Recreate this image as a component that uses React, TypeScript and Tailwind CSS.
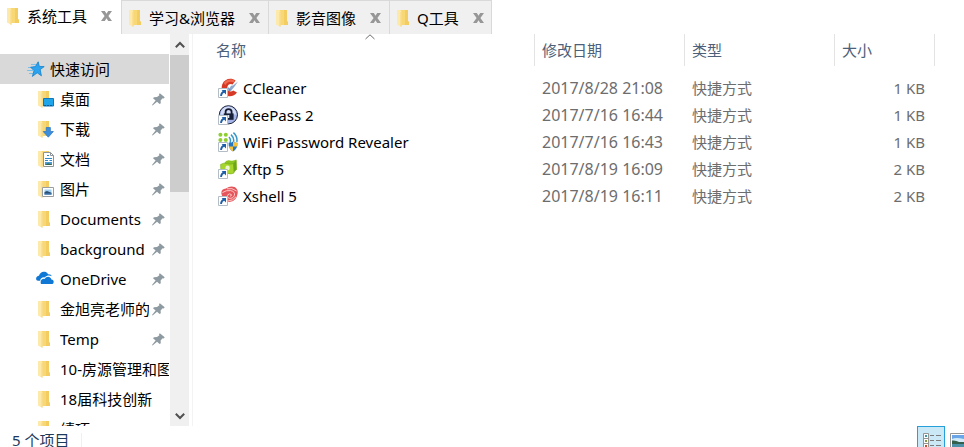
import React from "react";

type IconName =
  | "folder"
  | "desktop"
  | "download"
  | "document"
  | "picture"
  | "onedrive";

type FileIconName = "ccleaner" | "keepass" | "wifi" | "xftp" | "xshell";

const tabs = [
  { label: "系统工具", active: true },
  { label: "学习&浏览器", active: false },
  { label: "影音图像", active: false },
  { label: "Q工具", active: false },
];

const places: { label: string; icon: IconName; pinned: boolean }[] = [
  { label: "桌面", icon: "desktop", pinned: true },
  { label: "下载", icon: "download", pinned: true },
  { label: "文档", icon: "document", pinned: true },
  { label: "图片", icon: "picture", pinned: true },
  { label: "Documents", icon: "folder", pinned: true },
  { label: "background", icon: "folder", pinned: true },
  { label: "OneDrive", icon: "onedrive", pinned: true },
  { label: "金旭亮老师的", icon: "folder", pinned: true },
  { label: "Temp", icon: "folder", pinned: true },
  { label: "10-房源管理和图", icon: "folder", pinned: false },
  { label: "18届科技创新", icon: "folder", pinned: false },
  { label: "绩项", icon: "folder", pinned: false },
];

const files: { name: string; icon: FileIconName; date: string; size: string }[] = [
  { name: "CCleaner", icon: "ccleaner", date: "2017/8/28 21:08", size: "1 KB" },
  { name: "KeePass 2", icon: "keepass", date: "2017/7/16 16:44", size: "1 KB" },
  { name: "WiFi Password Revealer", icon: "wifi", date: "2017/7/16 16:43", size: "1 KB" },
  { name: "Xftp 5", icon: "xftp", date: "2017/8/19 16:09", size: "2 KB" },
  { name: "Xshell 5", icon: "xshell", date: "2017/8/19 16:11", size: "2 KB" },
];

function FolderShape() {
  return (
    <>
      <path d="M3 1H11V12.5H12V16H3Z" fill="#f8d775" />
      <path d="M8 1H11V12.5H12V16H8Z" fill="#f3cd62" />
      <path d="M0 1H3.5L4.5 3V18L0 15.5Z" fill="#fde9a9" />
      <path d="M4 3V17.5" stroke="#f6d480" strokeWidth="1" />
    </>
  );
}

function TabFolder() {
  return (
    <svg width="12" height="18" viewBox="0 0 12 18" className="shrink-0" aria-hidden="true">
      <FolderShape />
    </svg>
  );
}

function PlaceIcon({ name }: { name: IconName }) {
  if (name === "onedrive") {
    return (
      <svg width="18" height="18" viewBox="0 0 18 18" className="shrink-0" aria-hidden="true">
        <path
          d="M0.2 9.5C-0.2 7.4 1 6 3 5.8C3.6 3 6 1.2 8.8 1.8C10.4 2.1 11.6 3 12.3 4.4C14 4.2 15.4 5 15.8 6.3C13.5 4.9 10.6 5.4 8.8 7.4C6.2 7 4.2 8.6 4.2 10.8C2.2 11 0.8 10.8 0.2 9.5Z"
          fill="#0f78d4"
        />
        <path
          d="M5 14C3.8 11.2 5.6 8.4 8.8 8.9C10.2 6 14.5 6 15.4 9.6C17.4 9.5 18.4 11.8 17.2 13.4C16.8 14 16.4 14 15.5 14Z"
          fill="#0f78d4"
        />
      </svg>
    );
  }
  return (
    <svg width="18" height="18" viewBox="0 0 18 18" className="shrink-0" aria-hidden="true">
      <g transform="translate(2 0)">
        <FolderShape />
      </g>
      {name === "desktop" && (
        <>
          <path d="M7.5 8.5H17.5V16H7.5Z" fill="#1ea5ea" stroke="#1277b8" />
          <path d="M8 15.5H17" stroke="#0b5d98" strokeDasharray="2 1" />
        </>
      )}
      {name === "download" && (
        <path d="M10.2 7.5H14.4V11.5H17.4L12.3 17.2L7.2 11.5H10.2Z" fill="#3b8ede" stroke="#2b74c0" strokeWidth="0.7" />
      )}
      {name === "document" && (
        <>
          <path d="M7.5 2.5H14.5L17.5 5.5V16.5H7.5Z" fill="#fff" stroke="#8f9498" />
          <path d="M14.5 2.5V5.5H17.5" fill="none" stroke="#8f9498" />
          <path d="M11 5.5H13M9 8.5H16M9 10.5H12M13.5 10.5H16" stroke="#2f88c8" />
          <path d="M9 12H16V15H9Z" fill="#4d9bd4" />
          <path d="M9 15L12 13.2L16 14.4V15Z" fill="#35674a" />
        </>
      )}
      {name === "picture" && (
        <>
          <path d="M6.5 7.5H17.5V16.5H6.5Z" fill="#fff" stroke="#9a9da0" />
          <path d="M8.5 9.5H15.5V14.5H8.5Z" fill="#9fd0f2" />
          <path d="M8.5 12L11 11L15.5 12.8V14.5H8.5Z" fill="#2c4f74" />
          <path d="M8.5 13.5H15.5V14.5H8.5Z" fill="#4a86c4" />
        </>
      )}
    </svg>
  );
}

function StarIcon() {
  return (
    <svg width="18" height="18" viewBox="0 0 18 18" className="shrink-0" aria-hidden="true">
      <path d="M4 4.5H9M1 7.5H5M0 10.5H6M2 13.5H6" stroke="#7cc0e8" strokeWidth="1" />
      <path
        d="M11.2 1.8L12.3 6.4L17.2 6.6L13.2 9.6L14.4 15.8L10.2 12.8L5.4 16.4L7 10.6L3.6 7.2L8.4 6.6Z"
        fill="#2ba3ee"
        stroke="#1480ca"
        strokeWidth="0.8"
      />
    </svg>
  );
}

function PinIcon() {
  return (
    <svg width="13" height="13" viewBox="0 0 13 13" className="shrink-0" aria-hidden="true">
      <path
        d="M7.8 0.3L12.7 4.3L11.7 5.4L10.6 5.2L8.6 7.4L8.8 10.2L7.6 11.1L5 8.7L0.6 12.6L0 12L3.6 7.4L1 5.2L2 4.2L5 4.1L7.4 2.2L7 1.2Z"
        fill="#8e9aa1"
      />
    </svg>
  );
}

function ShortcutArrow() {
  return (
    <>
      <path d="M0.5 10.5H9.5V19.5H0.5Z" fill="#fff" stroke="#b4bcc6" />
      <path d="M3.6 12H8V16.4Z" fill="#1f5fa8" />
      <path d="M6.4 13.4Q3.2 14.6 3 18" fill="none" stroke="#1f5fa8" strokeWidth="1.8" />
    </>
  );
}

function FileIcon({ name }: { name: FileIconName }) {
  return (
    <svg width="20" height="20" viewBox="0 0 20 20" className="shrink-0" aria-hidden="true">
      {name === "ccleaner" && (
        <>
          <path
            d="M17.6 2.4C13 -0.8 6.5 0.6 4.3 6.2C2.4 11.8 5 17.8 10.8 18.2C14.5 18.4 17.4 17.2 19 14.6L15.2 12.6C13.2 14.4 9.8 13.6 9.4 10.6C8.9 7.2 11.8 4.8 14.6 6.6Z"
            fill="#d63a26"
          />
          <path d="M5.6 5C8.6 0.8 13.6 0.8 17 2.8L15.8 4.6C12.5 3 9.5 3.8 7.4 7Z" fill="#ef6a50" />
          <path d="M20 3.4L15 7.4L13 7.8L11 11.2L13.4 12.2L16.4 8.8Z" fill="#8ea9cc" />
          <path d="M10 9L13.6 12.4L10.6 13.2Z" fill="#6a8ec0" />
        </>
      )}
      {name === "keepass" && (
        <>
          <circle cx="10.4" cy="9.8" r="9.1" fill="#a3b5e8" stroke="#1c2238" strokeWidth="1" />
          <path d="M2.4 9.4C3 4 6.4 1.8 10.4 1.8C14.2 1.8 17.6 4.4 18.4 9.4Z" fill="#d3dcf6" />
          <path d="M7.6 9V6.8Q7.6 4.2 10.6 4.2Q13.6 4.2 13.6 6.8V9" fill="none" stroke="#141a30" strokeWidth="1.8" />
          <path d="M5.8 8.4H15.6V14.8H5.8Z" fill="#182038" />
          <path d="M10.6 10V13" stroke="#dce5f8" strokeWidth="1.4" />
        </>
      )}
      {name === "wifi" && (
        <>
          <circle cx="2.4" cy="2.8" r="2" fill="#8fce2f" />
          <circle cx="7.8" cy="2.8" r="2" fill="#8fce2f" />
          <circle cx="2.4" cy="8" r="2" fill="#8fce2f" />
          <circle cx="7.8" cy="8" r="2" fill="#8fce2f" />
          <path d="M11 5Q13.4 7.4 12 11M13 2.6Q16.6 6 15.4 10.6M15.4 0.6Q19.8 4.6 18.8 10" fill="none" stroke="#3a98c8" strokeWidth="1.5" />
          <path d="M10.6 10.8Q13.4 11 15 9.6Q16.8 11 19.4 10.8Q19.8 17 15 19.6Q10.2 17 10.6 10.8Z" fill="#2878c0" />
          <path d="M15 9.6Q16.8 11 19.4 10.8V14.6H15ZM10.8 14.6H15V19.6Q11.6 17.8 10.8 14.6Z" fill="#f5c23c" />
        </>
      )}
      {name === "xftp" && (
        <>
          <path d="M6.6 3.6Q9 0.6 12 1.4Q15 2.4 18.4 0.6L19 10.4Q16 13 12.8 12L7.6 11.6Z" fill="#8cc420" />
          <path d="M2.6 5.4Q6 3.4 9 4.6Q12.4 6 15.6 4.4L16 14Q13 15.6 9.6 14.4Q6 13.4 3 15.4Z" fill="#a6d62c" stroke="#76ac1c" strokeWidth="0.6" />
          <ellipse cx="9.6" cy="9" rx="2.2" ry="2.4" fill="#effac8" />
          <path d="M15.4 4.4L18.4 1V10.4L16 13.4Z" fill="#6fa51b" />
        </>
      )}
      {name === "xshell" && (
        <>
          <path d="M3.4 7.4Q3 2.8 8 2.4Q12 -0.4 16.6 1Q20.8 3.4 19.4 8.4Q18.4 14.6 12.4 15.8Q8 16.6 6 12.4Q3.6 10.6 3.4 7.4Z" fill="#e4565b" />
          <path
            d="M4.4 6.6Q8 4 12.6 4.6Q17.4 5.6 16.4 9.4Q14.8 13 11 12.2Q8.4 11 9.8 8.8Q11.6 7 13.4 8.6Q13.8 10 12 10.2M9 2.8Q14 1.4 18.6 5M10 15Q15 14.8 18 10.8"
            fill="none"
            stroke="#ffd6d3"
            strokeWidth="0.9"
          />
        </>
      )}
      <ShortcutArrow />
    </svg>
  );
}

function Tab({ label, active }: { label: string; active: boolean }) {
  return (
    <div
      className={
        active
          ? "flex h-8 items-center bg-white pr-[9px] pl-[7px]"
          : "flex h-[34px] items-center border-t border-l border-[#d9d9d9] bg-[#f0f0f0] pt-px pr-2 pl-[7px] last:border-r last:pr-[7px]"
      }
    >
      <button type="button" role="tab" aria-selected={active} className="flex items-center gap-2 whitespace-nowrap">
        <TabFolder />
        {label}
      </button>
      <button type="button" aria-label={`关闭 ${label}`} className="ml-[14px] shrink-0">
        <svg width="11" height="10" viewBox="0 0 11 10" aria-hidden="true" className="block">
          <path d="M0 0H3.8L5.5 2.8L7.2 0H11L7.4 5L11 10H7.2L5.5 7.2L3.8 10H0L3.6 5Z" fill="#979797" />
        </svg>
      </button>
    </div>
  );
}

function ScrollBar() {
  return (
    <div className="flex w-[19px] shrink-0 flex-col bg-[#f0f0f0]">
      <button type="button" aria-label="向上滚动" className="flex h-[21px] shrink-0 items-center justify-center">
        <svg width="10" height="8" viewBox="0 0 10 8" aria-hidden="true">
          <path d="M0.8 6.2L5 2L9.2 6.2" fill="none" stroke="#505050" strokeWidth="2" />
        </svg>
      </button>
      <div className="flex-1">
        <div className="h-[39%] bg-[#cdcdcd]" />
      </div>
      <button type="button" aria-label="向下滚动" className="flex h-[21px] shrink-0 items-center justify-center">
        <svg width="10" height="8" viewBox="0 0 10 8" aria-hidden="true">
          <path d="M0.8 1.8L5 6L9.2 1.8" fill="none" stroke="#505050" strokeWidth="2" />
        </svg>
      </button>
    </div>
  );
}

function Sidebar() {
  return (
    <aside className="flex w-[193px] shrink-0 overflow-hidden border-r border-[#f3f3f3]">
      <nav className="mr-px min-w-0 flex-1 overflow-hidden pt-5" aria-label="导航">
        <button type="button" className="flex h-[30px] w-full items-center gap-[5px] bg-[#d9d9d9] pl-[27px]">
          <StarIcon />
          快速访问
        </button>
        <ul>
          {places.map((place) => (
            <li key={place.label}>
              <button type="button" className="flex h-[30px] w-full items-center pl-9 text-left">
                <PlaceIcon name={place.icon} />
                <span className="ml-[6px] min-w-0 flex-1 overflow-hidden whitespace-nowrap">{place.label}</span>
                {place.pinned && (
                  <span className="mr-1 ml-[3px]">
                    <PinIcon />
                  </span>
                )}
              </button>
            </li>
          ))}
        </ul>
      </nav>
      <div className="mr-[3px] flex">
        <ScrollBar />
      </div>
    </aside>
  );
}

function FileTable() {
  return (
    <main className="min-w-0 flex-1 overflow-hidden pr-[29px] pl-3">
      <table className="w-full table-fixed border-separate border-spacing-0">
        <colgroup>
          <col />
          <col className="w-[150px]" />
          <col className="w-[150px]" />
          <col className="w-[100px]" />
        </colgroup>
        <thead>
          <tr className="h-8 text-left text-[#4c607a]">
            <th scope="col" aria-sort="ascending" className="relative border-r border-[#e3e3e3] p-0 pl-[11px] font-normal">
              名称
              <svg
                width="10"
                height="6"
                viewBox="0 0 10 6"
                aria-hidden="true"
                className="absolute top-0 left-1/2 -translate-x-1/2"
              >
                <path d="M0.5 5L5 0.8L9.5 5" fill="none" stroke="#6d6d6d" />
              </svg>
            </th>
            <th scope="col" className="border-r border-[#e3e3e3] p-0 pl-[7px] font-normal">修改日期</th>
            <th scope="col" className="border-r border-[#e3e3e3] p-0 pl-[7px] font-normal">类型</th>
            <th scope="col" className="border-r border-[#e3e3e3] p-0 pl-[7px] font-normal">大小</th>
          </tr>
        </thead>
        <tbody className="text-[#6d6d6d] before:block before:h-2">
          {files.map((file) => (
            <tr key={file.name} className="h-[27px]">
              <td className="p-0 pl-[13px] text-black">
                <span className="flex items-center gap-[5px]">
                  <FileIcon name={file.icon} />
                  {file.name}
                </span>
              </td>
              <td className="p-0 pl-[7px] text-[16px] leading-5 whitespace-nowrap">{file.date}</td>
              <td className="p-0 pl-[7px]">快捷方式</td>
              <td className="p-0 pr-[10px] text-right">{file.size}</td>
            </tr>
          ))}
        </tbody>
      </table>
    </main>
  );
}

function StatusBar() {
  return (
    <footer className="flex h-[21px] shrink-0 items-start justify-between overflow-hidden text-[#1e395b]">
      <div className="flex items-start pl-3">
        <span className="pt-1 leading-5">5 个项目</span>
        <span className="mt-[7px] ml-3 h-5 w-px bg-[#f0f0f0]" />
      </div>
      <div className="flex items-start gap-[5px]">
        <button
          type="button"
          aria-label="详细信息"
          aria-pressed="true"
          className="flex h-7 w-7 items-start border border-[#26a0da] bg-[#cbe8f6] pt-[6px] pl-[5px]"
        >
          <svg width="18" height="20" viewBox="0 0 18 20" aria-hidden="true">
            <path d="M0.5 0.5H5.5V19.5H0.5ZM0.5 5.5H5.5M0.5 10.5H5.5M0.5 15.5H5.5" fill="#fff" stroke="#949494" />
            <path d="M2 2H4V4H2Z" fill="#3d95a8" />
            <path d="M2 7H4V9H2Z" fill="#839b39" />
            <path d="M2 12H4V14H2Z" fill="#c5502d" />
            <path d="M7 2.5H11M13 2.5H18M7 7.5H11M13 7.5H18M7 12.5H11M13 12.5H18" stroke="#7c7c7c" />
          </svg>
        </button>
        <button type="button" aria-label="大缩略图" className="mt-[7px] w-[14px] overflow-hidden">
          <svg width="18" height="16" viewBox="0 0 18 16" aria-hidden="true" className="block max-w-none">
            <path d="M0.5 0.5H17.5V15.5H0.5Z" fill="#fff" stroke="#949494" />
            <path d="M2 2H16V14H2Z" fill="#6aa5e8" />
            <path d="M2 6Q6 3.6 16 6.5V10H2Z" fill="#d3ebf8" />
            <path d="M2 7.5Q6 7 9 9H16V11H2Z" fill="#345f4c" />
            <path d="M2 11H16V14H2Z" fill="#4c91a8" />
          </svg>
        </button>
      </div>
    </footer>
  );
}

export default function App() {
  return (
    <div className="flex h-screen flex-col overflow-hidden bg-white font-['Noto_Sans','Noto_Sans_CJK_SC',sans-serif] text-[15px] leading-5 text-black">
      <header role="tablist" className="flex h-[34px] shrink-0 items-start">
        {tabs.map((tab) => (
          <Tab key={tab.label} label={tab.label} active={tab.active} />
        ))}
      </header>
      <div className="flex min-h-0 flex-1">
        <Sidebar />
        <FileTable />
      </div>
      <StatusBar />
    </div>
  );
}
